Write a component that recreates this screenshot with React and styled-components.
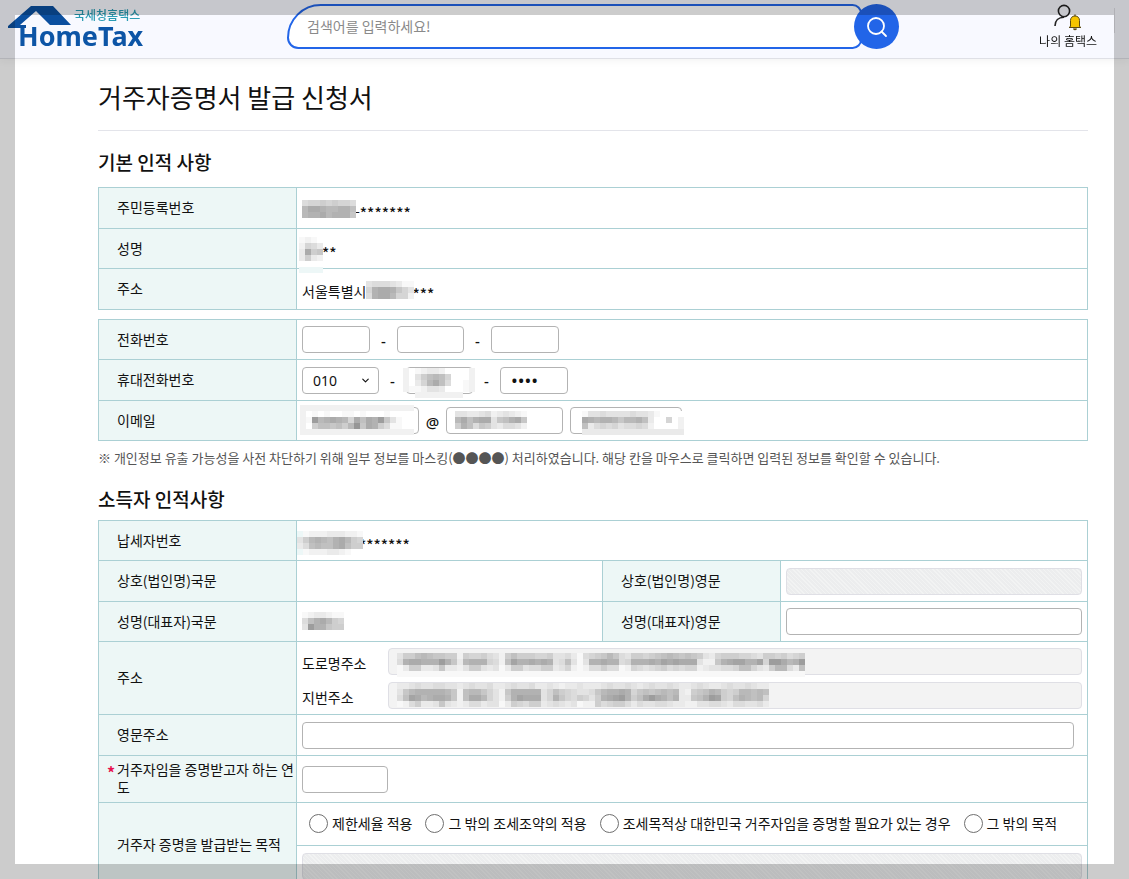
import React from "react";
import styled, { createGlobalStyle, css } from "styled-components";
import { ChevronDown } from "lucide-react";

const ROAD = [
    "b886567788d8998abd86888998bbacea98757ab889876567678bc988899ab8898a98",
    "a433444147c54449ad62443434ba6beb44344a944434232333bdd743224429113541",
    "ec88ccb7ccdb88bcbec88baa88cb9dedaa8aaed9aba98a9a99dcbbaa9669bc855ac6",
    "eeeeeeeeeeeeeeeeeeeeeeeeeeeeeeeeeeeeeeeeeeeeeeeeeeeeeeeeeeeeeeeeeeee",
];

const LOT = [
    "ccbabbaabbcbabbaccbabbaccbcdccbcccbabbabcbabbabccbabccbabbabcc",
    "b754444457d65579bd744444b9689abba75443497676565cd8764589855656",
    "a623543347d63359bd842333b9479a89b84321486313464cc7641289645659",
    "eda8ccb7bcdcaacbbec89a88cbabcbedd8a988acabbaabccddbbaabcaabbac",
];

// each character is a grey level, "." leaves the cell open
const shade = (ch) => {
    if (ch === "t") return "#edf7f7";
    const v = 150 + parseInt(ch, 16) * 7;
    return `rgb(${v},${v},${v})`;
};

const Mosaic = ({ rows, x = 0, y = 0 }) => {
    const cols = Math.max(...rows.map((r) => r.length));
    return (
        <Pixels $x={x} $y={y} width={cols * 6} height={rows.length * 6} shapeRendering="crispEdges" aria-hidden="true">
            {rows.map((row, r) =>
                row.split("").map((ch, c) =>
                    ch === "." ? null : <rect key={r + "-" + c} x={c * 6} y={r * 6} width="6" height="6" fill={shade(ch)} />
                )
            )}
        </Pixels>
    );
};

const App = () => {
    return (
        <Page>
            <GlobalStyle />
            <Header>
                <Brand href="#">
                    <svg width="64" height="26" viewBox="0 0 64 26" aria-hidden="true">
                        <path d="M23 2H45L63 21H42L28 7L12 21H18V24H0V22Z" fill="#0b4f9f" />
                    </svg>
                    <small>국세청홈택스</small>
                    <strong>HomeTax</strong>
                </Brand>
                <Search onSubmit={(e) => e.preventDefault()}>
                    <input type="text" placeholder="검색어를 입력하세요!" aria-label="검색어" />
                    <button type="submit" aria-label="검색">
                        <svg width="22" height="22" viewBox="0 0 22 22" fill="none" stroke="#fff" strokeWidth="1.8">
                            <circle cx="10" cy="10" r="8" />
                            <path d="M15.5 15.5L20 20" strokeLinecap="round" />
                        </svg>
                    </button>
                </Search>
                <MyTax href="#">
                    <svg width="28" height="27" viewBox="0 0 28 27" fill="none">
                        <circle cx="10" cy="7" r="5.6" stroke="#222" strokeWidth="1.6" />
                        <path d="M1 22C1 16.5 4.5 13.3 10 13.3" stroke="#222" strokeWidth="1.6" />
                        <path d="M16.5 22.5V16.5C16.5 13.8 18.2 12 21 12S25.5 13.8 25.5 16.5V22.5L27 23.5H15Z" fill="#f5c400" stroke="#5b4a12" strokeWidth="1" />
                        <path d="M21 10.5V12M19.5 24.5Q21 26.5 22.5 24.5" stroke="#5b4a12" strokeWidth="1.3" />
                    </svg>
                    <span>나의 홈택스</span>
                </MyTax>
                <Divider />
            </Header>

            <Main>
                <Title>거주자증명서 발급 신청서</Title>

                <SubTitle $gap={13}>기본 인적 사항</SubTitle>
                <Table>
                    <colgroup><col className="head" /><col /></colgroup>
                    <tbody>
                        <Row $h={41}>
                            <th scope="row">주민등록번호</th>
                            <td>
                                <Value>
                                    <Masked $w={53}><Mosaic rows={["a9989899a", "533455446", "544354447"]} y={2} /></Masked>
                                    -<Stars>*******</Stars>
                                </Value>
                            </td>
                        </Row>
                        <Row $h={40}>
                            <th scope="row">성명</th>
                            <td>
                                <Value>
                                    <Masked $w={20}><Mosaic rows={["edef", "d9ac", "c387", "c8cd", "ffff", "tttt"]} x={-3} y={-2} /></Masked>
                                    <Stars>**</Stars>
                                </Value>
                            </td>
                        </Row>
                        <Row $h={41}>
                            <th scope="row">주소</th>
                            <td>
                                <Value>
                                    서울특별시
                                    <Masked $w={46}><Mosaic rows={["baaabcee", "9433479b", "a433599d"]} y={2} /></Masked>
                                    <Stars>***</Stars>
                                </Value>
                            </td>
                        </Row>
                    </tbody>
                </Table>

                <Table $top={9}>
                    <colgroup><col className="head" /><col /></colgroup>
                    <tbody>
                        <Row $h={40}>
                            <th scope="row">전화번호</th>
                            <td>
                                <Line>
                                    <Field $w={68} type="text" aria-label="전화번호 앞자리" />
                                    <Dash>-</Dash>
                                    <Field $w={67} type="text" aria-label="전화번호 가운데자리" />
                                    <Dash>-</Dash>
                                    <Field $w={68} type="text" aria-label="전화번호 뒷자리" />
                                </Line>
                            </td>
                        </Row>
                        <Row $h={41}>
                            <th scope="row">휴대전화번호</th>
                            <td>
                                <Line>
                                    <Pick $w={77}>
                                        <select aria-label="휴대전화번호 앞자리" defaultValue="010"><option>010</option><option>011</option></select>
                                        <ChevronDown size={11} strokeWidth={2.5} />
                                    </Pick>
                                    <Dash>-</Dash>
                                    <Cover>
                                        <Field $w={67} type="text" aria-label="휴대전화번호 가운데자리" />
                                        <Mosaic rows={["dfedccdffffd", "dfb86569fffd", "dfc9536affed", "deedbbcfffed", "..dddddddd.."]} x={-3} y={1} />
                                    </Cover>
                                    <Dash>-</Dash>
                                    <Field $w={68} type="password" defaultValue="0000" aria-label="휴대전화번호 뒷자리" />
                                </Line>
                            </td>
                        </Row>
                        <Row $h={40}>
                            <th scope="row">이메일</th>
                            <td>
                                <Line>
                                    <Cover>
                                        <Field $w={117} type="text" aria-label="이메일 아이디" />
                                        <Mosaic
                                            rows={["ddddddddddddddddddd", "dfefeffeefefffeffff", "de1543459363417beff", "df866768507348aeeff", "ddddddddddddddddddd"]}
                                            x={-2}
                                            y={-2}
                                        />
                                    </Cover>
                                    <Dash>@</Dash>
                                    <Cover>
                                        <Field $w={117} type="text" aria-label="이메일 도메인" />
                                        <Mosaic rows={["bbccbadcbcde", "536433b76437", "846a78bcaabd"]} x={9} y={4} />
                                    </Cover>
                                    <Cover $left={7}>
                                        <Pick $w={112}><select aria-label="이메일 도메인 선택" /></Pick>
                                        <Mosaic rows={["ebbabbbbabbceffff", "34544575546cff9fd", "6ca9a9baa9adffffd", "ccccccccccccccccc"]} x={12} y={4} />
                                    </Cover>
                                </Line>
                            </td>
                        </Row>
                    </tbody>
                </Table>
                <Note>※ 개인정보 유출 가능성을 사전 차단하기 위해 일부 정보를 마스킹(●●●●) 처리하였습니다. 해당 칸을 마우스로 클릭하면 입력된 정보를 확인할 수 있습니다.</Note>

                <SubTitle $gap={9}>소득자 인적사항</SubTitle>
                <Table>
                    <colgroup><col className="head" /><col className="half" /><col className="sub" /><col /></colgroup>
                    <tbody>
                        <Row $h={40}>
                            <th scope="row">납세자번호</th>
                            <td colSpan={3}>
                                <Value>
                                    <Masked $w={57}><Mosaic rows={["tedddcccdde", "b8545643589", "ca656643688", "tedddccdeff"]} x={-5} /></Masked>
                                    <Stars>*******</Stars>
                                </Value>
                            </td>
                        </Row>
                        <Row $h={41}>
                            <th scope="row">상호(법인명)국문</th>
                            <td />
                            <th scope="row"><label htmlFor="corpEn">상호(법인명)영문</label></th>
                            <td><Field id="corpEn" type="text" disabled $hatch /></td>
                        </Row>
                        <Row $h={40}>
                            <th scope="row">성명(대표자)국문</th>
                            <td>
                                <Value>
                                    <Masked $w={42}><Mosaic rows={["edccdee", "a643589", "b144788"]} /></Masked>
                                </Value>
                            </td>
                            <th scope="row"><label htmlFor="ceoEn">성명(대표자)영문</label></th>
                            <td><Field id="ceoEn" type="text" /></td>
                        </Row>
                        <Row $h={73}>
                            <th scope="row">주소</th>
                            <td colSpan={3}>
                                <Stack>
                                    <AddressLine>
                                        <label htmlFor="road">도로명주소</label>
                                        <Cover $grow>
                                            <Field id="road" type="text" disabled />
                                            <Mosaic rows={ROAD} x={9} y={5} />
                                        </Cover>
                                    </AddressLine>
                                    <AddressLine>
                                        <label htmlFor="lot">지번주소</label>
                                        <Cover $grow>
                                            <Field id="lot" type="text" disabled />
                                            <Mosaic rows={LOT} x={9} y={1} />
                                        </Cover>
                                    </AddressLine>
                                </Stack>
                            </td>
                        </Row>
                        <Row $h={41}>
                            <th scope="row"><label htmlFor="addrEn">영문주소</label></th>
                            <td colSpan={3}><Line $right={8}><Field id="addrEn" type="text" /></Line></td>
                        </Row>
                        <Row $h={47}>
                            <th scope="row">
                                <Required htmlFor="year"><b>*</b><span>거주자임을 증명받고자 하는 연도</span></Required>
                            </th>
                            <td colSpan={3}><Field $w={86} id="year" type="text" /></td>
                        </Row>
                        <Row $h={43}>
                            <th scope="row" rowSpan={2}>거주자 증명을 발급받는 목적</th>
                            <td colSpan={3}>
                                <Radios>
                                    {["제한세율 적용", "그 밖의 조세조약의 적용", "조세목적상 대한민국 거주자임을 증명할 필요가 있는 경우", "그 밖의 목적"].map((t) => (
                                        <label key={t}><input type="radio" name="purpose" />{t}</label>
                                    ))}
                                </Radios>
                            </td>
                        </Row>
                        <Row $h={41}>
                            <td colSpan={3}><Field type="text" disabled $hatch aria-label="그 밖의 목적 내용" /></td>
                        </Row>
                    </tbody>
                </Table>
            </Main>
            <Frame />
        </Page>
    );
};

const GlobalStyle = createGlobalStyle`
    *{
        box-sizing: border-box;
    }

    body{
        margin: 0;
        background: #fff;
        color: #111;
        font-family: "Noto Sans CJK KR", sans-serif;
        font-size: 14px;
    }

    input, select, button{
        font-family: "Noto Sans", "Noto Sans CJK KR", sans-serif;
        font-size: 14px;
    }
`;

const Page = styled.div`
    height: 100vh;
    overflow-y: auto;
    scrollbar-width: none;
`;

const Header = styled.header`
    position: sticky;
    top: 0;
    z-index: 2;
    display: flex;
    align-items: flex-start;
    height: 59px;
    padding: 4px 14px 0 8px;
    background: #f8f9ff;
    border-bottom: 1px solid #dfe0e6;
    box-shadow: 0 2px 8px rgba(0, 0, 0, 0.05);
`;

const Brand = styled.a`
    position: relative;
    display: flex;
    flex-direction: column;
    flex: 0 0 279px;
    padding-top: 3px;
    text-decoration: none;

    svg{
        position: absolute;
        left: 0;
        top: 0;
    }

    small{
        padding-left: 66px;
        color: #2a9bb3;
        font-size: 12px;
        font-weight: 500;
        line-height: 16px;
    }

    strong{
        padding-left: 10px;
        color: #0d55a6;
        font-family: "Noto Sans", sans-serif;
        font-size: 27px;
        font-weight: 700;
        line-height: 26px;
    }
`;

const Search = styled.form`
    display: flex;
    flex: 0 1 612px;

    input{
        flex: 1;
        min-width: 0;
        height: 45px;
        padding: 0 18px 2px;
        border: 2px solid #2265e8;
        border-radius: 36px 10px 10px 12px;
        background: #fff;
        font-family: "Noto Sans CJK KR", sans-serif;
        outline: none;
    }

    input::placeholder{
        color: #8a8a8a;
    }

    button{
        display: flex;
        align-items: center;
        justify-content: center;
        flex: 0 0 45px;
        height: 45px;
        margin-left: -8px;
        padding: 0;
        border: 0;
        border-radius: 50%;
        background: #2265e8;
        z-index: 1;
    }
`;

const MyTax = styled.a`
    display: flex;
    flex-direction: column;
    align-items: center;
    margin-left: auto;
    color: #111;
    font-size: 12px;
    line-height: 20px;
    text-decoration: none;
`;

const Divider = styled.span`
    width: 1px;
    height: 25px;
    margin: 4px 0 0 17px;
    background: #dcdde3;
`;

const Main = styled.main`
    padding: 18px 41px 40px 98px;
`;

const Title = styled.h1`
    margin: 0;
    padding-bottom: 13px;
    border-bottom: 1px solid #e3e4ea;
    font-size: 26px;
    font-weight: 400;
    line-height: 40px;
`;

const SubTitle = styled.h2`
    margin: 19px 0 ${(p) => p.$gap}px;
    font-size: 19px;
    font-weight: 500;
    line-height: 24px;
`;

const Table = styled.table`
    width: 100%;
    margin-top: ${(p) => p.$top || 0}px;
    table-layout: fixed;
    border-collapse: separate;
    border-spacing: 0;
    border-top: 1px solid #abd0d4;
    border-right: 1px solid #abd0d4;

    .head{
        width: 198px;
    }

    .half{
        width: 306px;
    }

    .sub{
        width: 178px;
    }
`;

const Row = styled.tr`
    th, td{
        height: ${(p) => p.$h}px;
        padding: 0 5px;
        border-left: 1px solid #abd0d4;
        border-bottom: 1px solid #abd0d4;
        line-height: 18px;
        text-align: left;
    }

    th{
        padding: 0 0 2px 18px;
        background: #edf7f6;
        font-weight: 400;
    }
`;

const Value = styled.div`
    display: flex;
    align-items: center;
    height: 24px;
    margin-top: 4px;
`;

const Masked = styled.span`
    position: relative;
    display: inline-block;
    width: ${(p) => p.$w}px;
    height: 24px;
`;

const Stars = styled.span`
    padding-top: 5px;
    font-size: 15px;
    font-weight: 500;
`;

const Pixels = styled.svg`
    position: absolute;
    left: ${(p) => p.$x}px;
    top: ${(p) => p.$y}px;
    pointer-events: none;
    z-index: 1;
`;

const Line = styled.div`
    display: flex;
    align-items: center;
    padding-right: ${(p) => p.$right || 0}px;
`;

const Cover = styled.div`
    position: relative;
    display: flex;
    flex: ${(p) => (p.$grow ? "1" : "none")};
    margin-left: ${(p) => p.$left || 0}px;
`;

const box = css`
    height: 27px;
    border: 1px solid #b3b3b3;
    border-radius: 4px;
    background: #fff;
    color: #111;
    outline: none;
`;

const Field = styled.input`
    ${box}
    display: block;
    width: ${(p) => (p.$w ? p.$w + "px" : "100%")};
    padding: 0 10px;

    &:disabled{
        border-color: #dfdfe5;
        background: ${(p) => (p.$hatch ? "repeating-linear-gradient(45deg, #f2f3f3 0 1px, #ecedee 1px 3px)" : "#f3f3f3")};
    }

    &[type="password"]{
        font-size: 18px;
    }
`;

const Pick = styled.div`
    position: relative;
    width: ${(p) => p.$w}px;

    select{
        ${box}
        display: block;
        width: 100%;
        padding: 0 10px;
        appearance: none;
    }

    svg{
        position: absolute;
        right: 8px;
        top: 8px;
        pointer-events: none;
    }
`;

const Dash = styled.span`
    width: 27px;
    padding-top: 2px;
    font-family: "Noto Sans", sans-serif;
    font-size: 15px;
    font-weight: 500;
    text-align: center;
`;

const Note = styled.p`
    margin: 7px 0 0;
    color: #555;
    font-size: 13px;
    line-height: 20px;
`;

const Stack = styled.div`
    display: flex;
    flex-direction: column;
    gap: 7px;
`;

const AddressLine = styled.div`
    display: flex;
    align-items: center;

    label{
        width: 86px;
        padding-top: 4px;
    }
`;

const Required = styled.label`
    display: flex;
    margin-left: -10px;
    word-break: break-all;

    b{
        flex: 0 0 10px;
        color: #e8124f;
        font-size: 16px;
        font-weight: 700;
        line-height: 24px;
    }
`;

const Radios = styled.div`
    display: flex;
    gap: 13px;
    padding: 0 0 2px 7px;
    white-space: nowrap;

    label{
        display: flex;
        align-items: center;
        gap: 4px;
    }

    input{
        width: 19px;
        height: 19px;
        margin: 0;
        border: 1px solid #6f6f6f;
        border-radius: 50%;
        background: #fff;
        appearance: none;
    }
`;

const Frame = styled.div`
    position: fixed;
    inset: 0;
    z-index: 3;
    border: 15px solid rgba(0, 0, 0, 0.2);
    pointer-events: none;
`;

export default App;
